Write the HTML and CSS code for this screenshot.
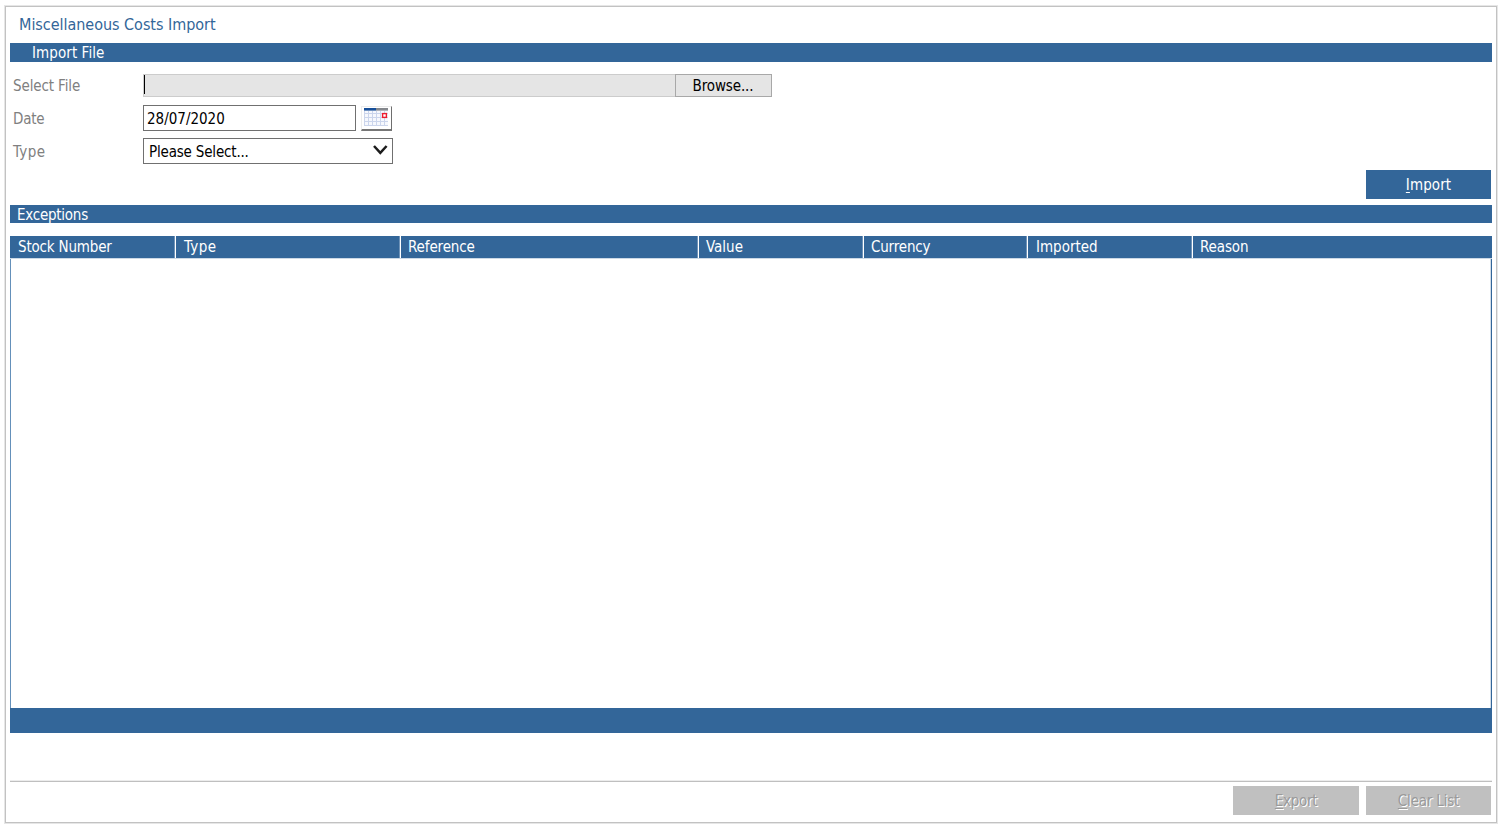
FILE: index.html
```
<!DOCTYPE html>
<html lang="en">
<head>
<meta charset="utf-8">
<title>Miscellaneous Costs Import</title>
<link rel="stylesheet" href="styles.css">
</head>
<body>
<main class="panel">
  <h1 class="title"><span class="t-title">Miscellaneous Costs Import</span></h1>
  <h2 class="bar bar-import"><span class="t-import">Import File</span></h2>
  <form class="form">
    <div class="row">
      <label class="label t-select">Select File</label>
      <div class="file"><div class="file-path"><i class="caret"></i></div><button type="button" class="browse"><span class="t-browse">Browse...</span></button></div>
    </div>
    <div class="row">
      <label class="label t-date">Date</label>
      <div class="date"><span>28/07/2020</span></div>
      <button type="button" class="calendar" aria-label="Calendar">
        <svg width="24" height="18" viewBox="0 0 24 18">
          <rect width="24" height="18" fill="#f6f8fd"/>
          <path d="M.5 3v15M4.5 3v15M8.5 3v15M12.5 3v15M16.5 3v15M20.5 3v15M0 5.5h24M0 9.5h24M0 13.5h24M0 17.5h24" stroke="#cbd5ec" fill="none"/>
          <rect width="12" height="2.6" fill="#174f99"/><rect x="12" width="12" height="2.6" fill="#85888d"/>
          <rect x="18.6" y="5.6" width="3.8" height="3.8" fill="#fff" stroke="#ed1c2e" stroke-width="1.4"/>
        </svg>
      </button>
    </div>
    <div class="row">
      <label class="label t-type">Type</label>
      <div class="select"><span class="t-please">Please Select...</span>
        <svg width="15" height="10" viewBox="0 0 15 10"><path d="M1 1l6.3 6.8L13.6 1" fill="none" stroke="#1c1c1c" stroke-width="2.5"/></svg>
      </div>
    </div>
  </form>
  <div class="actions"><button type="button" class="btn"><span class="t-btn"><u>I</u>mport</span></button></div>
  <h2 class="bar bar-exceptions"><span class="t-exc">Exceptions</span></h2>
  <section class="grid">
    <div class="head">
      <div><span class="t-stock">Stock Number</span></div><div class="wide"><span class="t-type">Type</span></div><div><span class="t-ref">Reference</span></div><div><span>Value</span></div><div><span class="t-cur">Currency</span></div><div class="wide"><span>Imported</span></div><div><span class="t-reason">Reason</span></div>
    </div>
    <div class="body"></div>
    <div class="foot"></div>
  </section>
  <footer class="bottom">
    <button type="button" class="btn off export"><span class="t-export"><u>E</u>xport</span></button>
    <button type="button" class="btn off"><span class="t-clear"><u>C</u>lear List</span></button>
  </footer>
</main>
</body>
</html>
```
FILE: styles.css
```
* { box-sizing: border-box; }
body { margin: 0; padding: 5px 6px 0 4px; height: 824px; overflow: hidden; background: #fff; font: 15px/18px "DejaVu Sans Condensed", "DejaVu Sans", sans-serif; font-stretch: condensed; }
span, label { white-space: nowrap; }
button { font: inherit; padding: 0; border-radius: 0; }
.panel { height: 817px; margin: 1px 0 0 1px; padding: 0 4px; border: 1px solid #c2c2c2; outline: 1px solid #e6e6e6; display: flex; flex-direction: column; }
.title { margin: 0; height: 36px; padding: 9px 0 0 9px; font-size: 16px; font-weight: normal; color: #336699; }
.bar { margin: 0; background: #336699; color: #fff; font-size: 15px; font-weight: normal; }
.bar-import { height: 19px; padding-left: 22px; line-height: 21px; }
.form { padding: 11px 0 0 3px; height: 108px; }
.row { display: flex; height: 33px; align-items: flex-start; }
.label { width: 130px; flex: none; color: #808080; line-height: 27px; }
.file { display: flex; width: 629px; height: 24px; padding-top: 1px; }
.file-path { width: 532px; height: 23px; background: #e5e5e5; border: 1px solid #ccc; border-right: 0; }
.caret { display: block; width: 1px; height: 19px; background: #000; }
.browse { width: 97px; height: 23px; background: #e5e5e5; border: 1px solid #a8a8a8; color: #000; line-height: 20px; padding-right: 1px; }
.date { width: 213px; height: 26px; margin-top: -1px; border: 1px solid #707070; padding-left: 3px; line-height: 27px; color: #000; }
.calendar { width: 31px; height: 25px; margin-left: 5px; padding: 1px 0 0 2px; background: #fff; border: 1px solid #ececec; border-right: 1px solid #6e6e6e; border-bottom: 2px solid #777; display: flex; align-items: flex-start; }
.select { width: 250px; height: 26px; margin-top: -1px; border: 1px solid #707070; padding: 0 4px 3px 5px; display: flex; justify-content: space-between; align-items: center; color: #000; }
.select span { padding-top: 5px; }
.select svg { margin-top: 1px; }
.actions { height: 35px; padding-right: 1px; display: flex; justify-content: flex-end; }
.btn { width: 125px; height: 29px; border: 0; background: #336699; color: #fff; line-height: 31px; }
.btn u { text-decoration-thickness: 1px; text-underline-offset: 2px; }
.export { width: 126px; }
.bar-exceptions { height: 18px; padding-left: 7px; line-height: 20px; }
.grid { margin-top: 13px; height: 497px; }
.head { display: grid; grid-template-columns: 165px 225px 298px 165px 164px 165px 1fr; height: 23px; background: #336699; color: #fff; border-bottom: 1px solid #ccd9e6; line-height: 23px; }
.head div { border-left: 1px solid #fff; padding-left: 7px; height: 22px; }
.head .wide { padding-left: 8px; }
.head div:first-child { border-left: 0; padding-left: 8px; }
.head div:not(:last-child) { box-shadow: inset -1px 0 #6f93b8; }
.body { height: 449px; border-left: 1px solid #6490ba; border-right: 1px solid #336699; box-shadow: inset -1px 0 #d0dce8; }
.foot { height: 25px; background: #336699; }
.bottom { margin-top: 47px; border-top: 1px solid #ececec; box-shadow: inset 0 1px #bfbfbf; padding: 5px 1px 0; display: flex; justify-content: flex-end; gap: 7px; }
.off { background: #c0c0c0; color: #9a9a9a; text-shadow: 1px 1px #fff; }
.t-title { letter-spacing: -.03px; }
.t-import, .t-btn { letter-spacing: .08px; }
.t-select, .t-browse, .t-ref, .t-reason { letter-spacing: -.12px; }
.t-date, .t-exc { letter-spacing: -.25px; }
.t-type { letter-spacing: .4px; }
.t-please, .t-stock, .t-cur, .t-clear { letter-spacing: -.18px; }
.t-export { letter-spacing: -.3px; }
```
